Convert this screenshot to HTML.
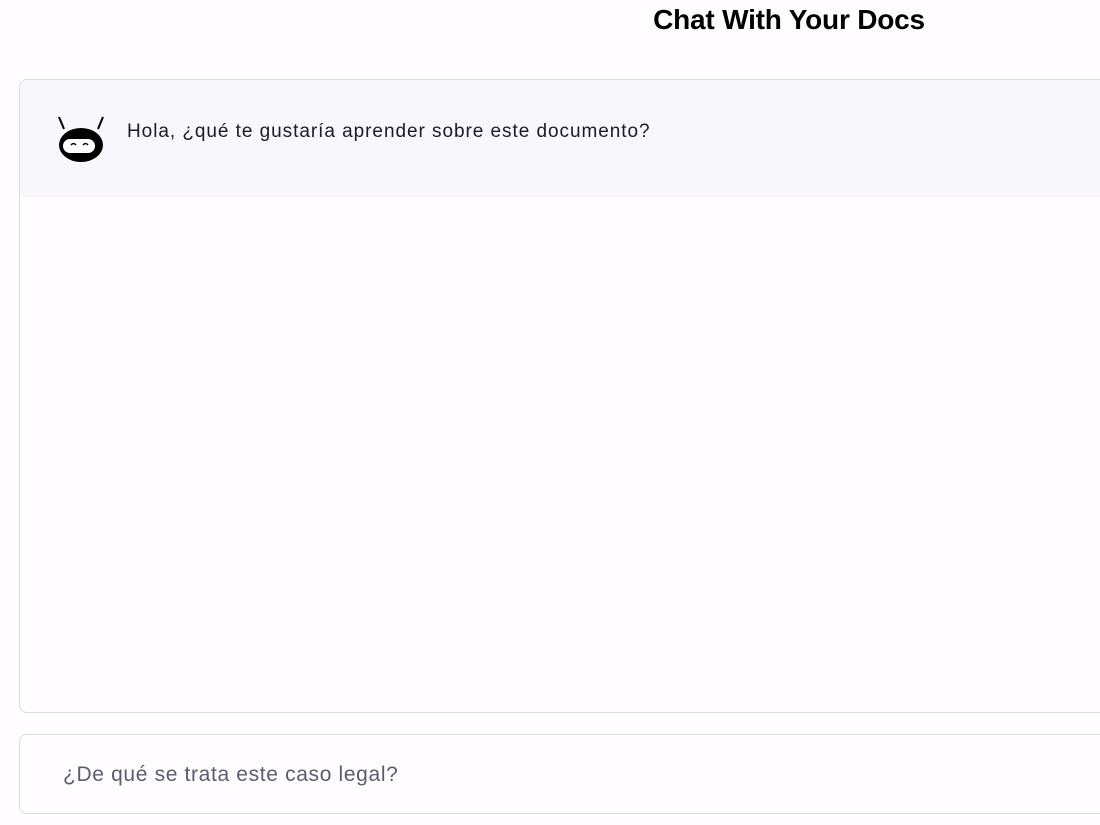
<!DOCTYPE html>
<html><head><meta charset="utf-8"><style>
body{margin:0;width:1100px;height:825px;background:#fffdff;overflow:hidden;font-family:"Liberation Sans",sans-serif;position:relative}
h1{position:absolute;left:589px;width:400px;top:0;margin:0;text-align:center;font-size:28px;line-height:40px;font-weight:bold;color:#000;letter-spacing:-0.2px}
.box{position:absolute;left:19px;top:79px;width:1110px;height:632px;border:1px solid #dcdbe6;border-radius:8px;background:#fffdff;overflow:hidden}
.msg{position:absolute;left:0;top:0;right:0;height:117px;background:#f8f7fc}
.msg span{position:absolute;left:107px;top:41px;font-size:19px;color:#1a1a2a;letter-spacing:0.95px}
.inp{position:absolute;left:19px;top:734px;width:1110px;height:78px;border:1px solid #dcdbe6;border-radius:8px;background:#fffdff}
.inp span{position:absolute;left:43px;top:28px;font-size:21px;color:#5a5d6e;letter-spacing:0.65px}
svg{position:absolute;left:36px;top:36px}
</style></head><body>
<h1>Chat With Your Docs</h1>
<div class="box"><div class="msg">
<svg width="50" height="50" viewBox="0 0 50 50">
<line x1="3" y1="1" x2="8" y2="13" stroke="#000" stroke-width="2"/>
<line x1="47" y1="1" x2="42" y2="13" stroke="#000" stroke-width="2"/>
<ellipse cx="25" cy="29" rx="22" ry="17" fill="#000"/>
<rect x="7" y="23" width="32" height="14" rx="7" fill="#fff"/>
<path d="M15 29 q2.5-3 5 0 M27 29 q2.5-3 5 0" stroke="#000" stroke-width="1.6" fill="none"/>
</svg>
<span>Hola, ¿qué te gustaría aprender sobre este documento?</span></div></div>
<div class="inp"><span>¿De qué se trata este caso legal?</span></div>
</body></html>
